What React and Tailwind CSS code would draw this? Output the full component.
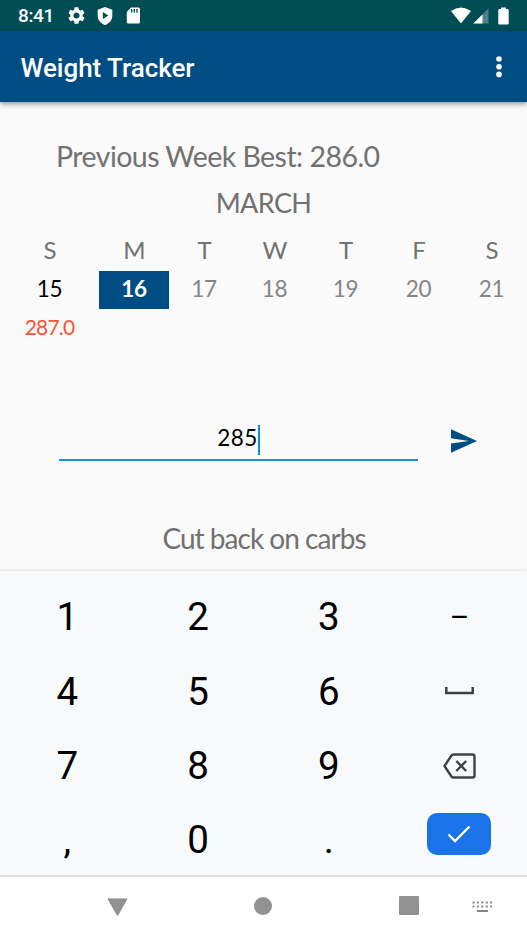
import React from "react";

const hand = "font-['Lato','Open_Sans',sans-serif]";

const days = [
  { letter: "S", date: "15", tone: "text-black", weight: "287.0" },
  { letter: "M", date: "16", tone: "font-bold text-white bg-[#004d84]" },
  { letter: "T", date: "17", tone: "text-[#858585]" },
  { letter: "W", date: "18", tone: "text-[#858585]" },
  { letter: "T", date: "19", tone: "text-[#858585]" },
  { letter: "F", date: "20", tone: "text-[#858585]" },
  { letter: "S", date: "21", tone: "text-[#858585]" },
];

function StatusBar() {
  return (
    <div className="flex h-[31px] items-center bg-[#004d56] pl-[18px] pr-[18px] text-white">
      <span className="w-[50px] text-[19px] font-medium leading-[31px] tracking-[-0.4px]">8:41</span>
      <svg width="17" height="17" viewBox="2 2 20 20" fill="currentColor">
        <path d="M19.14 12.94c.04-.3.06-.61.06-.94 0-.32-.02-.64-.07-.94l2.03-1.58a.49.49 0 0 0 .12-.61l-1.92-3.32a.49.49 0 0 0-.59-.22l-2.39.96c-.5-.38-1.03-.7-1.62-.94l-.36-2.54a.48.48 0 0 0-.48-.41h-3.84c-.24 0-.43.17-.47.41l-.36 2.54c-.59.24-1.13.57-1.62.94l-2.39-.96a.48.48 0 0 0-.59.22L2.74 8.87c-.12.21-.08.47.12.61l2.03 1.58c-.05.3-.09.63-.09.94s.02.64.07.94l-2.03 1.58a.49.49 0 0 0-.12.61l1.92 3.32c.12.22.37.29.59.22l2.39-.96c.5.38 1.03.7 1.62.94l.36 2.54c.05.24.24.41.48.41h3.84c.24 0 .44-.17.47-.41l.36-2.54c.59-.24 1.13-.56 1.62-.94l2.39.96c.22.08.47 0 .59-.22l1.92-3.32a.48.48 0 0 0-.12-.61zM12 15.6A3.61 3.61 0 0 1 8.4 12c0-1.98 1.62-3.6 3.6-3.6s3.6 1.62 3.6 3.6-1.62 3.6-3.6 3.6z" />
      </svg>
      <svg className="ml-[12px]" width="16" height="18" viewBox="0 0 16 18">
        <path d="M8 0 15.3 2.7V8.5C15.3 13 12.2 16.7 8 18 3.8 16.7.7 13 .7 8.5V2.7Z" fill="white" />
        <path d="M5.8 5.1 11.3 8.5 5.8 11.9Z" fill="#004d56" />
      </svg>
      <svg className="ml-[13px]" width="15" height="17" viewBox="0 0 15 17">
        <path d="M5 .5H12.5Q14 .5 14 2V15Q14 16.5 12.5 16.5H2.3Q.8 16.5.8 15V5Z" fill="white" />
        <path d="M5.6 2V5.5M8.3 2V5.5M11 2V5.5" stroke="#004d56" strokeWidth="1.4" />
      </svg>
      <svg className="ml-auto" width="20" height="17" viewBox="0 0 20 17">
        <path d="M0 4Q10-3 20 4L10 16.5Z" fill="white" />
      </svg>
      <svg className="ml-[2px]" width="16" height="16" viewBox="0 0 16 16">
        <path d="M15.5.5V15.5H.3Z" fill="#4d8288" />
        <path d="M9.5 6.4V15.5H.3Z" fill="white" />
      </svg>
      <svg className="ml-[9px]" width="11" height="18" viewBox="0 0 11 18">
        <path d="M3 .5H8V2H9.5Q10.7 2 10.7 3.2V16.3Q10.7 17.5 9.5 17.5H1.5Q.3 17.5.3 16.3V3.2Q.3 2 1.5 2H3Z" fill="white" />
      </svg>
    </div>
  );
}

function AppBar() {
  return (
    <header className="relative flex h-[71px] items-center justify-between bg-[#004d84] pl-[20.5px] pr-[25px] text-white shadow-[0_2px_5px_rgba(0,0,0,0.4)]">
      <h1 className="pt-[2px] text-[26px] font-medium leading-[32px] tracking-[-0.03px]">Weight Tracker</h1>
      <svg width="6" height="22" viewBox="0 0 6 22" fill="white">
        <circle cx="3" cy="3" r="2.8" />
        <circle cx="3" cy="10.7" r="2.8" />
        <circle cx="3" cy="18.4" r="2.8" />
      </svg>
    </header>
  );
}

function Tracker() {
  return (
    <main className={`h-[469px] bg-[#fafafa] text-[#717171] ${hand}`}>
      <p className="whitespace-nowrap pl-[56px] pt-[36px] text-[28.5px] leading-[36px] tracking-[-0.54px]">Previous Week Best: 286.0</p>
      <p className="mt-[11px] text-center text-[27px] leading-[36px] tracking-[-0.6px]">MARCH</p>
      <div className="mt-[14px] grid grid-cols-[99px_70px_70px_71px_71px_75px_71px] text-center">
        {days.map((d, i) => (
          <div key={i}>
            <div className="h-[34px] pl-px text-[24px] leading-[30px]">{d.letter}</div>
            <div className={`mt-[2px] h-[38px] text-[22.5px] leading-[36px] tracking-[-0.3px] ${d.tone}`}>{d.date}</div>
            {d.weight && <div className="text-[21px] leading-[36px] tracking-[-0.8px] text-[#ff5330]">{d.weight}</div>}
          </div>
        ))}
      </div>
      <div className="mt-[77px] flex h-[39px] items-start pl-[59px]">
        <div className="flex h-[39px] w-[359px] justify-center border-b-2 border-[#1b8fd0]">
          <span className="text-[22.5px] leading-[31px] tracking-[0.4px] text-black">285</span>
          <span className="mt-[3px] h-[30px] w-[2px] bg-[#0a8dd3]" />
        </div>
        <svg className="ml-[33px] mt-[7px]" width="26" height="24" viewBox="0 0 26 24">
          <path d="M0 .3 26 12 0 23.7V14.5L18 12 0 9.3Z" fill="#004d84" />
        </svg>
      </div>
      <p className="mt-[59px] pl-px text-center text-[28px] leading-[36px] tracking-[-0.97px]">Cut back on carbs</p>
    </main>
  );
}

function Key({ children }) {
  return <div className="flex h-[74.2px] items-center justify-center text-[38.5px] leading-[74px]">{children}</div>;
}

function Keypad() {
  return (
    <section className="relative h-[306px] border-b-2 border-[#dfe0e1] bg-[#f8f9fb] pl-[2px] pr-[2px] pt-[9.3px] text-black shadow-[0_-1px_2px_rgba(0,0,0,0.1)]">
      <div className="grid grid-cols-4">
        <Key>1</Key>
        <Key>2</Key>
        <Key>3</Key>
        <Key><span className="text-[30px]">–</span></Key>
        <Key>4</Key>
        <Key>5</Key>
        <Key>6</Key>
        <Key>
          <svg className="mb-px" width="29" height="8" viewBox="0 0 29 8" fill="none" stroke="#3c4043" strokeWidth="2.5">
            <path d="M1.3 0V6H27.7V0" />
          </svg>
        </Key>
        <Key>7</Key>
        <Key>8</Key>
        <Key>9</Key>
        <Key>
          <svg width="33" height="26" viewBox="0 0 33 26" fill="none" stroke="#3f4144" strokeWidth="2.4" strokeLinejoin="round">
            <path d="M10.3 1.5H29.5Q31.5 1.5 31.5 3.5V22.5Q31.5 24.5 29.5 24.5H10.3Q9.2 24.5 8.5 23.5L1.5 13 8.5 2.5Q9.2 1.5 10.3 1.5Z" />
            <path d="M13.3 8 23.2 18M23.2 8 13.3 18" />
          </svg>
        </Key>
        <Key>,</Key>
        <Key>0</Key>
        <Key>.</Key>
        <Key>
          <div className="mb-[12px] mr-px flex h-[42px] w-[64px] items-center justify-center rounded-[10px] bg-[#1a73e8]">
            <svg width="24" height="18" viewBox="0 0 24 18" fill="none" stroke="white" strokeWidth="2.4">
              <path d="M1.5 9.5 8 16 22.5 1.5" />
            </svg>
          </div>
        </Key>
      </div>
    </section>
  );
}

function NavBar() {
  return (
    <nav className="flex h-[60px] items-start bg-white pl-[107px] pt-[19px]">
      <svg className="mt-[2px]" width="21" height="19" viewBox="0 0 21 19">
        <path d="M1 .9H20L10.5 17.6Z" fill="#929292" stroke="#929292" strokeLinejoin="round" />
      </svg>
      <div className="ml-[126px] mt-px h-[18px] w-[18px] rounded-full bg-[#929292]" />
      <div className="ml-[127px] h-[19px] w-[20px] rounded-[1px] bg-[#929292]" />
      <svg className="ml-[53px] mt-[5px]" width="21" height="12" viewBox="0 0 21 12" stroke="#858585" strokeWidth="2">
        <path d="M.5 1.5H21M.5 5.5H21" strokeDasharray="2 2.4" />
        <path d="M5 10H16" />
      </svg>
    </nav>
  );
}

export default function App() {
  return (
    <div className="h-[937px] w-[527px] overflow-hidden font-[Roboto,sans-serif]">
      <StatusBar />
      <AppBar />
      <Tracker />
      <Keypad />
      <NavBar />
    </div>
  );
}
